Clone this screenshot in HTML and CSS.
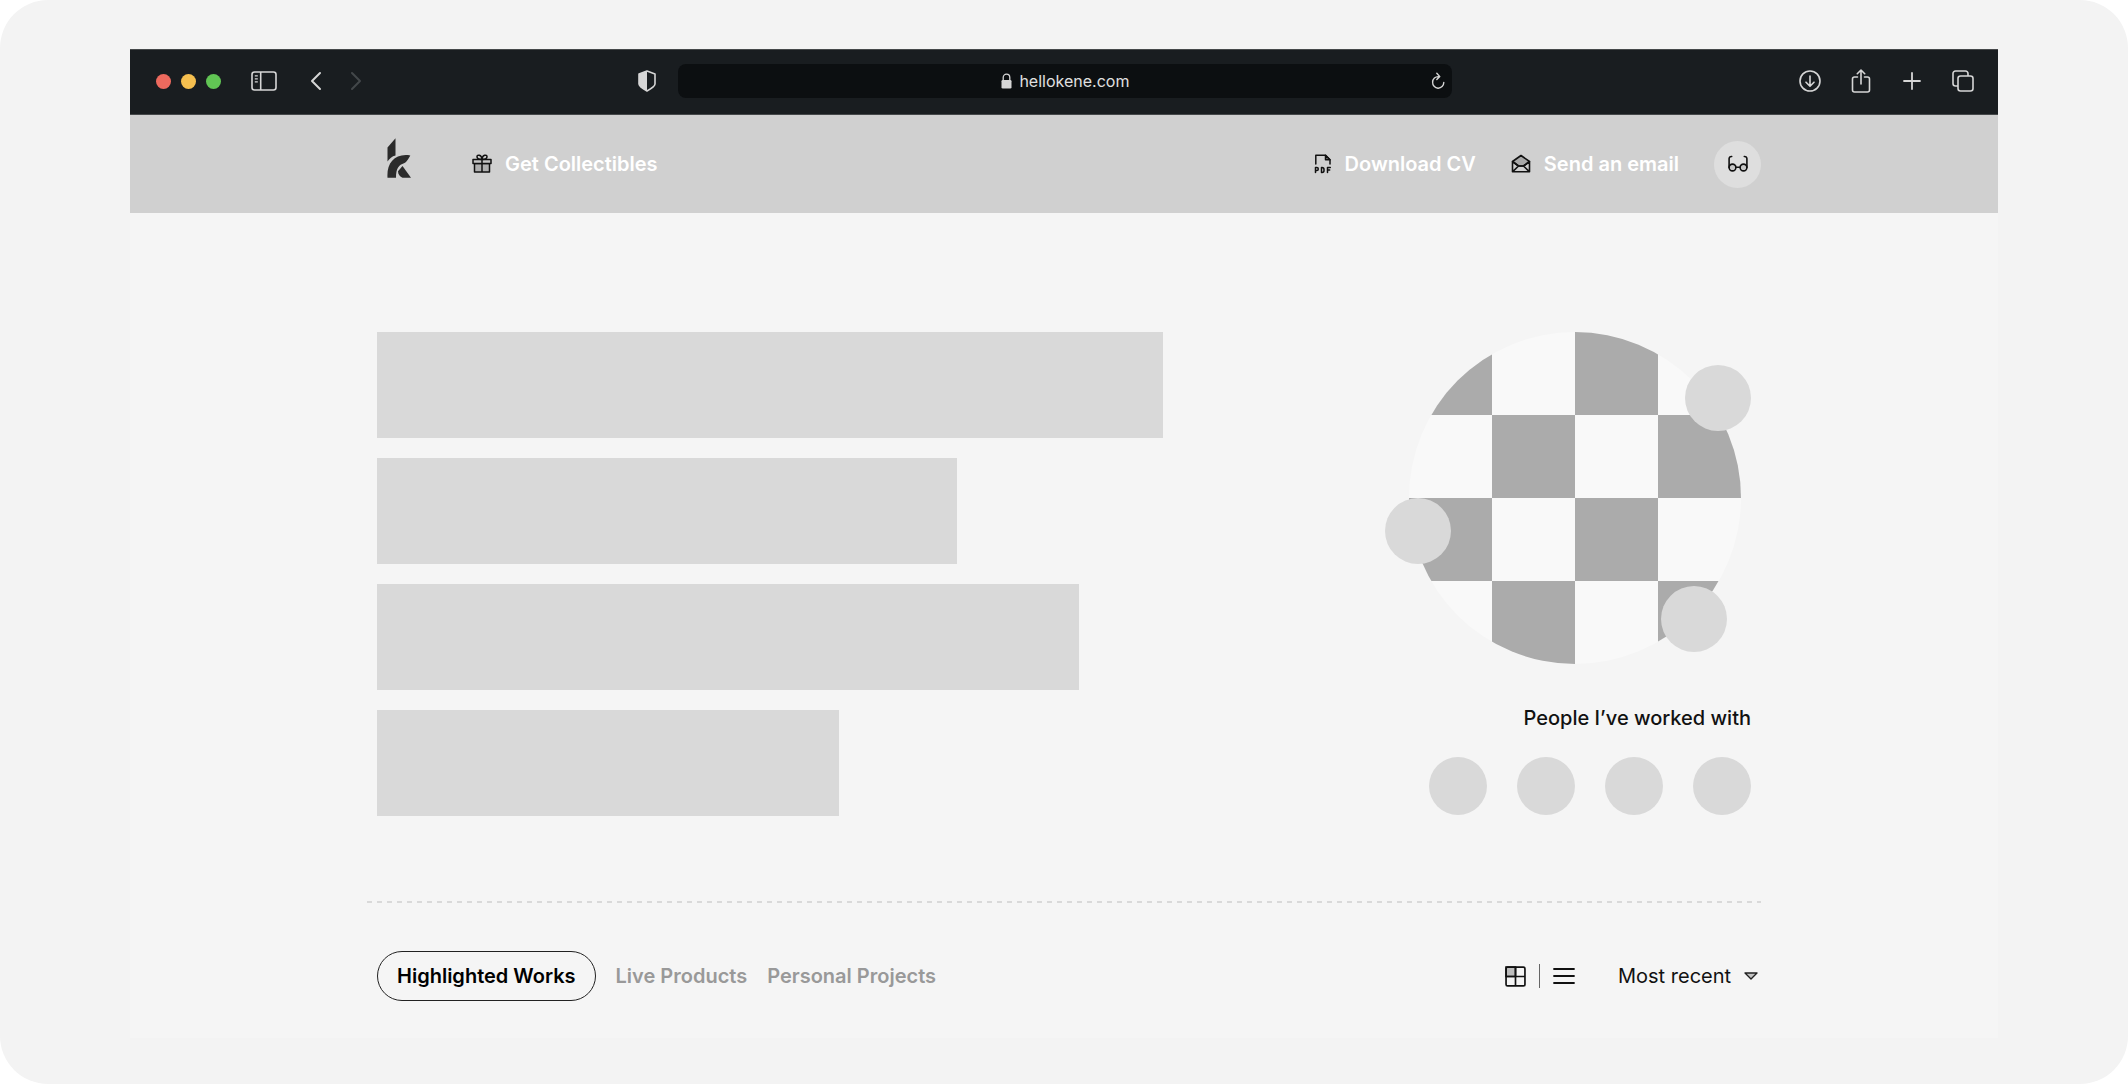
FILE: index.html
```html
<!DOCTYPE html>
<html lang="en">
<head>
<meta charset="utf-8">
<meta name="viewport" content="width=device-width, initial-scale=1">
<title>hellokene.com</title>
<link rel="stylesheet" href="styles.css">
</head>
<body>
<div class="canvas">
  <div class="browser">
    <div class="toolbar">
      <div class="toolbar-left">
        <span class="light light-red"></span>
        <span class="light light-yellow"></span>
        <span class="light light-green"></span>
        <button class="tool sidebar-tool" type="button" aria-label="Sidebar">
          <svg width="26" height="20" viewBox="0 0 26 20" fill="none" stroke="currentColor" stroke-width="1.6"><rect x="1" y="1" width="24" height="18" rx="2.5"/><path d="M9.7 1v18"/><path d="M3.8 4.8h3M3.8 7.8h3M3.8 10.8h3" stroke-width="1.2"/></svg>
        </button>
        <button class="tool" type="button" aria-label="Back">
          <svg width="12" height="20" viewBox="0 0 12 20" fill="none" stroke="currentColor" stroke-width="2" stroke-linecap="round" stroke-linejoin="round"><path d="M10 2 2 10l8 8"/></svg>
        </button>
        <button class="tool tool-off" type="button" aria-label="Forward" disabled>
          <svg width="12" height="20" viewBox="0 0 12 20" fill="none" stroke="currentColor" stroke-width="2" stroke-linecap="round" stroke-linejoin="round"><path d="m2 2 8 8-8 8"/></svg>
        </button>
      </div>
      <div class="toolbar-center">
        <button class="tool" type="button" aria-label="Privacy report">
          <svg width="18" height="22" viewBox="0 0 18 22"><path d="M9 1 17 4v10c0 2.500-3.500 4.500-8 7-4.500-2.500-8-4.500-8-7V4z" fill="none" stroke="currentColor" stroke-width="1.6" stroke-linejoin="round"/><path d="M9 1v20c-4.500-2.500-8-4.500-8-7V4z" fill="currentColor"/></svg>
        </button>
        <div class="address">
          <div class="address-main">
            <svg width="11" height="16" viewBox="0 0 11 16"><path d="M2.200 8V4.500a3.300 3.300 0 0 1 6.600 0V8" fill="none" stroke="currentColor" stroke-width="1.300"/><rect x=".5" y="7" width="10" height="8.500" rx="1.300" fill="currentColor"/></svg>
            <input class="address-input" type="text" value="hellokene.com" aria-label="Address">
          </div>
          <button class="tool" type="button" aria-label="Reload">
            <svg width="14" height="18" viewBox="0 0 14 18" fill="none" stroke="currentColor" stroke-width="1.400" stroke-linecap="round" stroke-linejoin="round"><path d="M7.500 4.600A5.600 5.800 0 1 0 12.800 10.500M5.800 1.200 8.800 4.600 5.800 7.600"/></svg>
          </button>
        </div>
      </div>
      <div class="toolbar-right">
        <button class="tool" type="button" aria-label="Downloads">
          <svg width="22" height="24" viewBox="0 0 22 24" fill="none" stroke="currentColor" stroke-width="1.600" stroke-linecap="round" stroke-linejoin="round"><circle cx="11" cy="12" r="10"/><path d="M11 7v10M7 13.200l4 4 4-4"/></svg>
        </button>
        <button class="tool" type="button" aria-label="Share">
          <svg width="22" height="24" viewBox="0 0 22 24" fill="none" stroke="currentColor" stroke-width="1.600" stroke-linecap="round" stroke-linejoin="round"><path d="M7.500 8H4.500a2 2 0 0 0-2 2v11a2 2 0 0 0 2 2h13a2 2 0 0 0 2-2V10a2 2 0 0 0-2-2h-3M11 15V1M7.300 4.700 11 1l3.700 3.700"/></svg>
        </button>
        <button class="tool" type="button" aria-label="New tab">
          <svg width="22" height="18" viewBox="0 0 22 18" fill="none" stroke="currentColor" stroke-width="1.800" stroke-linecap="round"><path d="M11 1v16M3 9h16"/></svg>
        </button>
        <button class="tool" type="button" aria-label="Tab overview">
          <svg width="22" height="22" viewBox="0 0 22 22" fill="none" stroke="currentColor" stroke-width="1.600"><rect x="6" y="6" width="15" height="15" rx="2.500"/><path d="M6 16H3.500A2.500 2.500 0 0 1 1 13.500v-10A2.500 2.500 0 0 1 3.500 1h10A2.500 2.500 0 0 1 16 3.500V6"/></svg>
        </button>
      </div>
    </div>

    <header class="site-header">
      <div class="container header-row">
        <a class="logo" href="#" aria-label="Kene">
          <svg width="24" height="40" viewBox="0 0 24 40" fill="#2b2b2b"><path d="M.5 23.500V9.500L8.500.3V17.500C5 18.300 2.500 20.500.5 23.500z"/><path d="M23.300 17.500c-1.800 3-3.300 6.700-6.300 7.700-5 1.500-8 4.800-8 14.500H.5C-.5 25 8 15 23.300 17.500z"/><path d="m15.500 28 8.500 11.700h-8.500c-2.500-1-4.500-3.500-4.500-6.500z"/></svg>
        </a>
        <a class="nav-link" href="#">
          <svg width="20" height="20" viewBox="0 0 20 20" stroke="#111" stroke-width="1.500" stroke-linejoin="round"><path d="M2.500 9.500h15V18h-15z" fill="#b0b0b0"/><path d="M1 5.500h18v4H1z" fill="#c6c6c6"/><path d="M10 5.500V18M10 5.500C7 5.500 5 4.500 5 2.800 5 .5 9.500 0 10 5.500zM10 5.500c3 0 5-1 5-2.700C15 .5 10.500 0 10 5.500z" fill="none"/></svg>
          Get Collectibles
        </a>
        <nav class="header-actions">
          <a class="nav-link" href="#">
            <svg width="18" height="20" viewBox="0 0 18 20" fill="none" stroke="#111" stroke-width="1.500" stroke-linecap="round" stroke-linejoin="round"><path d="M1.800 10V1.200h9.700L16 5.700V10"/><path d="M11.500 1.200v4.500H16z" fill="#777"/><path d="M1.500 18.500v-5h1.300a1.400 1.400 0 0 1 0 3H1.500M7.500 13.500v5h.5a2 2 0 0 0 2-2v-1a2 2 0 0 0-2-2zM13.500 18.500v-5h2.800M13.500 16h2.200"/></svg>
            Download CV
          </a>
          <a class="nav-link" href="#">
            <svg width="20" height="20" viewBox="0 0 20 20" fill="none" stroke="#111" stroke-width="1.600" stroke-linejoin="round"><path d="M1.500 7.500 10 1.500l8.500 6-6 4.500h-5z" fill="#a9a9a9"/><path d="M1.500 7.500v10.300h17V7.500M1.500 7.500l6 4.500h5l6-4.500M1.500 17.800l6-5.800M18.500 17.800l-6-5.800"/></svg>
            Send an email
          </a>
          <button class="glasses" type="button" aria-label="Reading view">
            <svg width="20" height="18" viewBox="0 0 20 18" fill="none" stroke="#111" stroke-width="1.600" stroke-linecap="round"><circle cx="4.500" cy="12.500" r="3.400" fill="#c8c8c8"/><circle cx="15.500" cy="12.500" r="3.400" fill="#c8c8c8"/><path d="M7.900 12.300h4.200M1.100 12.500V3.500A2.300 2.300 0 0 1 3.700 1.500M18.900 12.500V3.500A2.300 2.300 0 0 0 16.300 1.500"/></svg>
          </button>
        </nav>
      </div>
    </header>

    <main class="container">
      <section class="hero">
        <div class="bars">
          <div class="bar bar-1"></div>
          <div class="bar bar-2"></div>
          <div class="bar bar-3"></div>
          <div class="bar bar-4"></div>
        </div>
        <div class="profile">
          <div class="portrait">
            <div class="checker"></div>
            <span class="dot dot-top"></span>
            <span class="dot dot-left"></span>
            <span class="dot dot-bottom"></span>
          </div>
          <h2 class="people-title">People I’ve worked with</h2>
          <div class="people">
            <span class="person"></span>
            <span class="person"></span>
            <span class="person"></span>
            <span class="person"></span>
          </div>
        </div>
      </section>

      <div class="divider"></div>

      <div class="works-bar">
        <div class="tabs">
          <button class="tab tab-active" type="button">Highlighted Works</button>
          <button class="tab" type="button">Live Products</button>
          <button class="tab" type="button">Personal Projects</button>
        </div>
        <div class="view">
          <button class="view-button" type="button" aria-label="Grid view">
            <svg width="21" height="21" viewBox="0 0 20 20" fill="none" stroke="#111" stroke-width="1.600"><path d="M1 1h9v9H1z" fill="#bdbdbd"/><rect x="1" y="1" width="18" height="18" rx="1.500"/><path d="M10 1v18M1 10h18"/></svg>
          </button>
          <span class="view-rule"></span>
          <button class="view-button" type="button" aria-label="List view">
            <svg width="22" height="18" viewBox="0 0 22 18" stroke="#111" stroke-width="1.800" stroke-linecap="round"><path d="M1 2h20M1 9h20M1 16h20"/></svg>
          </button>
        </div>
        <label class="sort">
          <select class="sort-select" aria-label="Sort">
            <option>Most recent</option>
            <option>Oldest</option>
          </select>
          <svg width="14" height="8" viewBox="0 0 14 8" fill="#c4c4c4" stroke="#222" stroke-width="1.400" stroke-linejoin="round"><path d="M1 1h12L7 7z"/></svg>
        </label>
      </div>
    </main>
  </div>
</div>
</body>
</html>
```
FILE: styles.css
```css
* {
  box-sizing: border-box;
}

body {
  margin: 0;
  background: #fff;
  color: #111;
  font-family: Inter, "Noto Sans", sans-serif;
  font-size: 20px;
  line-height: 28px;
}

button {
  margin: 0;
  padding: 0;
  border: 0;
  background: none;
  color: inherit;
  font: inherit;
}

svg {
  display: block;
  flex: none;
}

.canvas {
  min-height: 100vh;
  padding: 49px 130px 46px;
  border-radius: 48px;
  background: #f3f3f3;
}

.browser {
  background: #f5f5f5;
}

/* Browser toolbar */
.toolbar {
  display: grid;
  grid-template-columns: 12fr minmax(0, 814px) 13fr;
  align-items: center;
  height: 66px;
  padding: 0 24px 2px 26px;
  border: solid #45484a;
  border-width: 1px 0;
  background: #191d20;
  color: #d6d6d6;
}

.toolbar-left,
.toolbar-center,
.toolbar-right {
  display: flex;
  align-items: center;
}

.light {
  width: 15px;
  height: 15px;
  margin-right: 10px;
  border-radius: 50%;
}

.light-red {
  background: #ed6a5e;
}

.light-yellow {
  background: #f5bf4f;
}

.light-green {
  background: #61c554;
}

.sidebar-tool {
  margin: 0 33px 0 20px;
}

.tool-off {
  margin-left: 28px;
  color: #43474a;
}

.toolbar-center {
  gap: 22px;
}

.toolbar-right {
  justify-content: flex-end;
  gap: 29px;
}

.address {
  display: flex;
  flex: 1;
  align-items: center;
  height: 34px;
  padding-right: 7px;
  border-radius: 8px;
  background: #0c0f11;
}

.address-main {
  display: flex;
  flex: 1;
  align-items: center;
  justify-content: center;
  gap: 7px;
  padding-left: 22px;
}

.address-input {
  width: 110px;
  padding: 0;
  border: 0;
  background: none;
  color: #e0e0e0;
  font: 16px/20px Inter, sans-serif;
}

/* Site header */
.site-header {
  display: flex;
  align-items: center;
  height: 98px;
  background: #d0d0d0;
}

.container {
  width: 100%;
  max-width: 1394px;
  margin: 0 auto;
}

.header-row {
  display: flex;
  align-items: center;
  gap: 61px;
  padding-left: 20px;
}

.logo {
  margin-bottom: 12px;
}

.nav-link {
  display: flex;
  align-items: center;
  gap: 13px;
  color: #fff;
  font-weight: 600;
  text-decoration: none;
  white-space: nowrap;
}

.header-actions {
  display: flex;
  align-items: center;
  gap: 35px;
  margin-left: auto;
}

.glasses {
  display: grid;
  place-items: center;
  width: 47px;
  height: 47px;
  border-radius: 50%;
  background: #dedede;
}

/* Hero */
.hero {
  display: flex;
  justify-content: space-between;
  padding: 119px 10px 85px;
}

.bars {
  display: flex;
  flex: 1;
  flex-direction: column;
  gap: 20px;
  max-width: 786px;
}

.bar {
  height: 106px;
  background: #d9d9d9;
}

.bar-2 {
  max-width: 580px;
}

.bar-3 {
  max-width: 702px;
}

.bar-4 {
  max-width: 462px;
}

.profile {
  display: flex;
  flex-direction: column;
  align-items: flex-end;
}

.portrait {
  position: relative;
  padding-right: 10px;
}

.checker {
  width: 332px;
  height: 332px;
  border-radius: 50%;
  background: repeating-conic-gradient(#f9f9f9 0 25%, #ababab 0 50%) 0 0 / 166px 166px;
}

.dot {
  position: absolute;
  width: 66px;
  height: 66px;
  border-radius: 50%;
  background: #d9d9d9;
}

.dot-top {
  top: 33px;
  right: 0;
}

.dot-left {
  top: 166px;
  left: -24px;
}

.dot-bottom {
  right: 24px;
  bottom: 12px;
}

.people-title {
  margin: 40px 0 25px;
  font-size: 20px;
  font-weight: 500;
}

.people {
  display: flex;
  gap: 30px;
}

.person {
  width: 58px;
  height: 58px;
  border-radius: 50%;
  background: #d9d9d9;
}

.divider {
  height: 2px;
  background: repeating-linear-gradient(90deg, #d9d9d9 0 5px, transparent 5px 10px);
}

/* Works filter row */
.works-bar {
  display: flex;
  align-items: center;
  padding: 48px 3px 37px 10px;
}

.tabs {
  display: flex;
  align-items: center;
  gap: 20px;
  margin-right: auto;
}

.tab {
  color: #999;
  font-weight: 600;
}

.tab-active {
  height: 50px;
  padding: 0 19px;
  border: 1px solid #222;
  border-radius: 25px;
  color: #000;
}

.view {
  display: flex;
  align-items: center;
  gap: 13px;
  margin-right: 43px;
}

.view-rule {
  width: 1px;
  height: 24px;
  background: #666;
}

.sort {
  display: flex;
  align-items: center;
  gap: 12px;
}

.sort-select {
  margin: 0;
  padding: 0;
  border: 0;
  appearance: none;
  background: none;
  color: #111;
  font: inherit;
}
```
